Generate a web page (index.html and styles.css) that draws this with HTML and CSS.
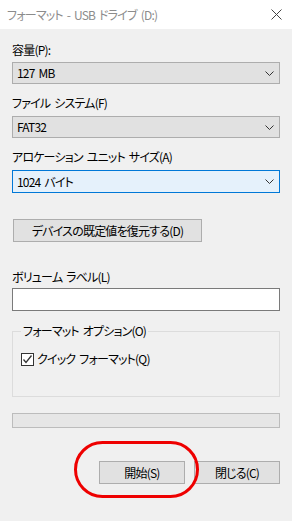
FILE: index.html
```html
<!DOCTYPE html>
<html lang="ja">
<head>
  <meta charset="UTF-8" />
  <meta name="viewport" content="width=device-width, initial-scale=1.0">
  <title>フォーマット - USB ドライブ (D:)</title>
  <link rel="stylesheet" href="styles.css">
</head>
<body>
  <div class="titlebar">
    <span class="title">フォーマット - USB ドライブ (D:)</span>
    <svg class="close" width="11" height="11" viewBox="0 0 11 11">
      <path d="M0.5 0.5 L10.5 10.5 M10.5 0.5 L0.5 10.5" stroke="#444" stroke-width="1" fill="none"/>
    </svg>
  </div>

  <div class="dialog">
    <div class="label first">容量(P):</div>
    <div class="combo">
      <span>127 MB</span>
      <svg class="chev" width="9" height="5" viewBox="0 0 9 5"><path d="M0.5 0.5 L4.5 4.5 L8.5 0.5" stroke="#333" fill="none"/></svg>
    </div>

    <div class="label">ファイル システム(F)</div>
    <div class="combo">
      <span>FAT32</span>
      <svg class="chev" width="9" height="5" viewBox="0 0 9 5"><path d="M0.5 0.5 L4.5 4.5 L8.5 0.5" stroke="#333" fill="none"/></svg>
    </div>

    <div class="label">アロケーション ユニット サイズ(A)</div>
    <div class="combo focused">
      <span>1024 バイト</span>
      <svg class="chev" width="9" height="5" viewBox="0 0 9 5"><path d="M0.5 0.5 L4.5 4.5 L8.5 0.5" stroke="#333" fill="none"/></svg>
    </div>

    <button class="btn restore">デバイスの既定値を復元する(D)</button>

    <div class="label volume">ボリューム ラベル(L)</div>
    <div class="textbox"></div>

    <fieldset class="options">
      <legend>フォーマット オプション(O)</legend>
      <div class="check-row">
        <span class="checkbox">
          <svg width="11" height="11" viewBox="0 0 11 11"><path d="M1.5 5.5 L4 8.5 L9.5 1.5" stroke="#333" stroke-width="1.3" fill="none"/></svg>
        </span>
        <span>クイック フォーマット(Q)</span>
      </div>
    </fieldset>

    <div class="progress"></div>

    <div class="actions">
      <button class="btn action">開始(S)</button>
      <button class="btn action">閉じる(C)</button>
      <div class="highlight"></div>
    </div>
  </div>
</body>
</html>
```

FILE: styles.css
```css
body {
  margin: 0;
  background: #f0f0f0;
  font-family: "Noto Sans CJK JP", "Noto Sans", sans-serif;
  font-size: 12px;
  font-feature-settings: "palt";
  letter-spacing: -0.8px;
  word-spacing: 2px;
  color: #000;
}
.titlebar {
  height: 29px;
  background: #fff;
  display: flex;
  align-items: center;
  justify-content: space-between;
  padding: 0 10px 0 7px;
}
.title {
  color: #8c8c8c;
  line-height: 16px;
}
.close {
  margin-top: -1px;
}
.dialog {
  padding: 0 12px 40px;
  position: relative;
}
.label {
  line-height: 16px;
  margin-top: 11px;
  margin-bottom: 5px;
}
.label.first {
  margin-top: 13px;
  margin-bottom: 4px;
}
.combo {
  height: 22px;
  box-sizing: border-box;
  border: 1px solid #adadad;
  background: #e1e1e1;
  display: flex;
  align-items: center;
  justify-content: space-between;
  padding: 0 5px 0 4px;
  line-height: 16px;
}
.combo.focused {
  border-color: #0078d7;
  background: #e5f1fb;
  height: 23px;
}
.btn {
  font-family: inherit;
  font-size: 12px;
  font-feature-settings: "palt";
  letter-spacing: -0.8px;
  word-spacing: 2px;
  color: #000;
  background: #e1e1e1;
  border: 1px solid #adadad;
  padding: 0;
  height: 23px;
  line-height: 16px;
}
.restore {
  display: block;
  margin: 26px 0 0 1px;
  width: 189px;
}
.label.volume {
  margin-top: 27px;
  margin-bottom: 3px;
}
.textbox {
  height: 23px;
  box-sizing: border-box;
  background: #fff;
  border: 1px solid #7a7a7a;
}
.options {
  margin: 12px 0 0 0;
  padding: 0 0 0 8px;
  border: 1px solid #dcdcdc;
  height: 74px;
  box-sizing: border-box;
}
.options legend {
  padding: 0 2px;
  line-height: 16px;
}
.check-row {
  display: flex;
  align-items: center;
  gap: 3px;
  margin-top: 12px;
  line-height: 16px;
}
.checkbox {
  width: 13px;
  height: 13px;
  box-sizing: border-box;
  border: 1px solid #333;
  background: #fff;
  display: flex;
  align-items: center;
  justify-content: center;
}
.progress {
  margin-top: 16px;
  height: 15px;
  box-sizing: border-box;
  background: #e6e6e6;
  border: 1px solid #bcbcbc;
}
.actions {
  position: relative;
  display: flex;
  justify-content: flex-end;
  gap: 9px;
  margin-top: 33px;
}
.action {
  width: 86px;
}
.highlight {
  position: absolute;
  left: 62px;
  top: -20px;
  width: 125px;
  height: 57px;
  box-sizing: border-box;
  border: 3px solid #ee0000;
  border-radius: 29px;
}
```
